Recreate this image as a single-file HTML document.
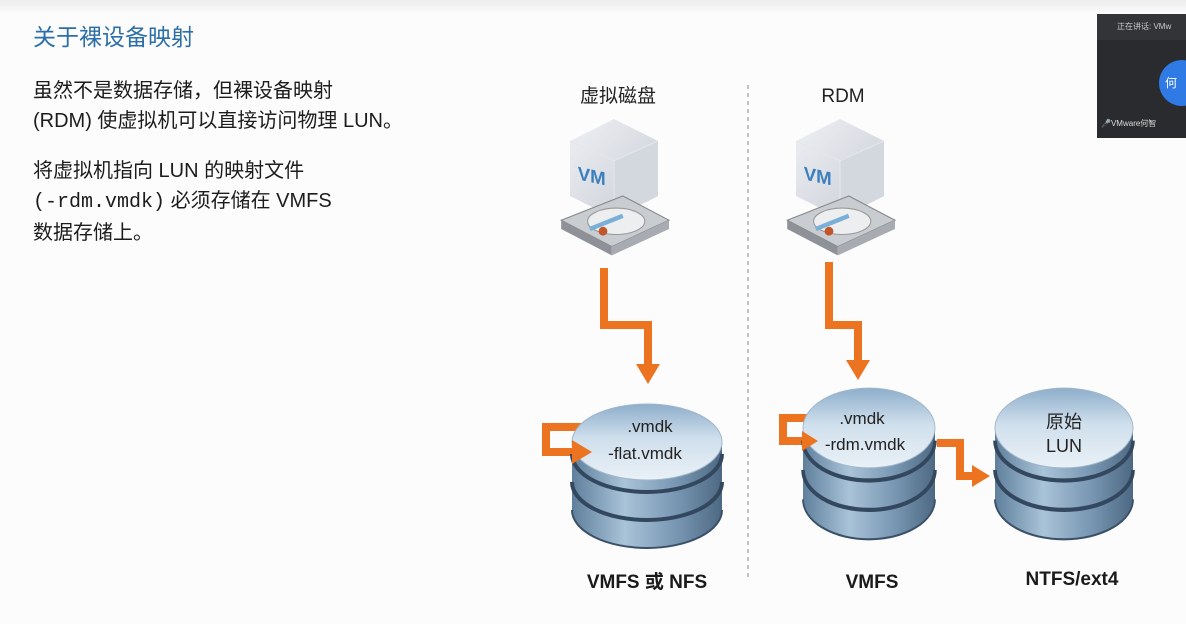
<!DOCTYPE html>
<html><head><meta charset="utf-8"><style>
body{margin:0;width:1186px;height:624px;overflow:hidden;background:#fcfcfc;font-family:"Liberation Sans","Noto Sans CJK SC",sans-serif;position:relative}
.t{position:absolute;color:#1c1c1c;font-size:20px;line-height:30px}
</style></head><body>
<div style="position:absolute;left:0;top:0;width:1186px;height:14px;background:linear-gradient(#ececec,#fcfcfc)"></div>
<div style="position:absolute;left:33px;top:18px;font-size:23px;color:#2c6fa8">关于裸设备映射</div>
<div class="t" style="left:33px;top:76px">虽然不是数据存储，但裸设备映射<br>(RDM) 使虚拟机可以直接访问物理 LUN。</div>
<div class="t" style="left:33px;top:156px">将虚拟机指向 LUN 的映射文件<br><span style="font-family:'Liberation Mono',monospace">(-rdm.vmdk)</span> 必须存储在 VMFS<br>数据存储上。</div>
<svg width="1186" height="624" style="position:absolute;left:0;top:0" xmlns="http://www.w3.org/2000/svg">
<defs>
<linearGradient id="band" x1="0" x2="1"><stop offset="0" stop-color="#5f7f9c"/><stop offset=".35" stop-color="#a9c3d8"/><stop offset=".7" stop-color="#7896b2"/><stop offset="1" stop-color="#4d6882"/></linearGradient>
<linearGradient id="top" x1="0" y1="0" x2="0" y2="1"><stop offset="0" stop-color="#8eaecb"/><stop offset=".45" stop-color="#cfdfec"/><stop offset="1" stop-color="#eaf1f7"/></linearGradient>
<linearGradient id="cube" x1="0" y1="0" x2="1" y2="1"><stop offset="0" stop-color="#eef0f4"/><stop offset="1" stop-color="#c8ccd4"/></linearGradient>
<g id="stk">
<path d="M-75 0 V68 a75 38 0 0 0 150 0 V0z" fill="url(#band)"/>
<path d="M-75 12 a75 38 0 0 0 150 0 M-75 40 a75 38 0 0 0 150 0" fill="none" stroke="#33485e" stroke-width="4"/>
<path d="M-75 68 a75 38 0 0 0 150 0" fill="none" stroke="#3a5068" stroke-width="2"/>
<ellipse cx="0" cy="0" rx="75" ry="38" fill="url(#top)" stroke="#9fb6ca"/>
</g>
<g id="vm">
<path d="M-40 -30 L0 -50 L40 -30 L40 20 L0 40 L-40 20Z" fill="url(#cube)"/>
<path d="M0 -12 L40 -30 V20 L0 40Z" fill="#d3d7de"/>
<path d="M-40 -30 L0 -12 L40 -30 M0 -12 V40" stroke="#e4e6ea" fill="none"/>
<text x="-33" y="12" font-size="17" font-weight="bold" fill="#3b7fbe" transform="skewY(12)">VM</text>
<path d="M-48 42 L8 20 L50 42 L-2 66Z" fill="#c9ccd0" stroke="#888"/>
<path d="M-48 42 V50 L-2 74 V66Z" fill="#8e9298"/><path d="M-2 66 V74 L50 50 V42Z" fill="#a8acb2"/>
<ellipse cx="2" cy="43" rx="26" ry="12" fill="#eceef0" stroke="#999"/>
<path d="M-22 50 L8 38" stroke="#7ab0d8" stroke-width="4"/><circle cx="-10" cy="52" r="4" fill="#c0562a"/>
</g>
</defs>
<line x1="748" y1="85" x2="748" y2="580" stroke="#888" stroke-dasharray="4,4"/>
<use href="#vm" transform="translate(614,174) scale(1.1)"/>
<use href="#vm" transform="translate(840,174) scale(1.1)"/>
<g stroke="#ec7420" stroke-width="8" fill="none">
<path d="M604 268 V325 H648 V365"/>
<path d="M829 262 V325 H858 V362"/>
<path d="M620 427 H546 V452 H575"/>
<path d="M834 418 H783 V441 H805"/>
<path d="M937 443 H960 V476 H975"/>
</g>
<use href="#stk" transform="translate(647,442)"/>
<use href="#stk" transform="translate(869,428) scale(.88,1.05)"/>
<use href="#stk" transform="translate(1064,428) scale(.92,1.05)"/>
<g fill="#ec7420">
<path d="M636 364 h24 l-12 20z"/><path d="M846 360 h24 l-12 20z"/>
<path d="M572 440 v24 l20 -12z"/><path d="M802 431 v20 l16 -10z"/><path d="M972 465 v22 l18 -11z"/>
</g>
<g font-size="17" fill="#222" text-anchor="middle">
<text x="650" y="432">.vmdk</text><text x="645" y="459">-flat.vmdk</text>
<text x="862" y="424">.vmdk</text><text x="865" y="450">-rdm.vmdk</text>
<text x="1064" y="428" font-size="18">原始</text><text x="1064" y="452" font-size="18">LUN</text>
</g>
<g font-size="19" font-weight="bold" fill="#1a1a1a" text-anchor="middle">
<text x="647" y="588">VMFS 或 NFS</text><text x="872" y="588">VMFS</text><text x="1072" y="585">NTFS/ext4</text>
</g>
<text x="618" y="102" font-size="19" fill="#222" text-anchor="middle">虚拟磁盘</text>
<text x="843" y="102" font-size="19" fill="#222" text-anchor="middle">RDM</text>
</svg>
<div style="position:absolute;left:1097px;top:14px;width:89px;height:124px;background:#2a2b2e">
<div style="height:26px;background:#333438;color:#ccc;font-size:8px;line-height:26px;padding-left:20px;white-space:nowrap;overflow:hidden">正在讲话: VMw</div>
<div style="position:absolute;left:62px;top:46px;width:46px;height:46px;border-radius:50%;background:#2f7ae5;color:#fff;font-size:12px;line-height:46px;padding-left:6px;box-sizing:border-box">何</div>
<div style="position:absolute;left:4px;top:104px;color:#ddd;font-size:8px">🎤VMware何智</div>
</div>
</body></html>
